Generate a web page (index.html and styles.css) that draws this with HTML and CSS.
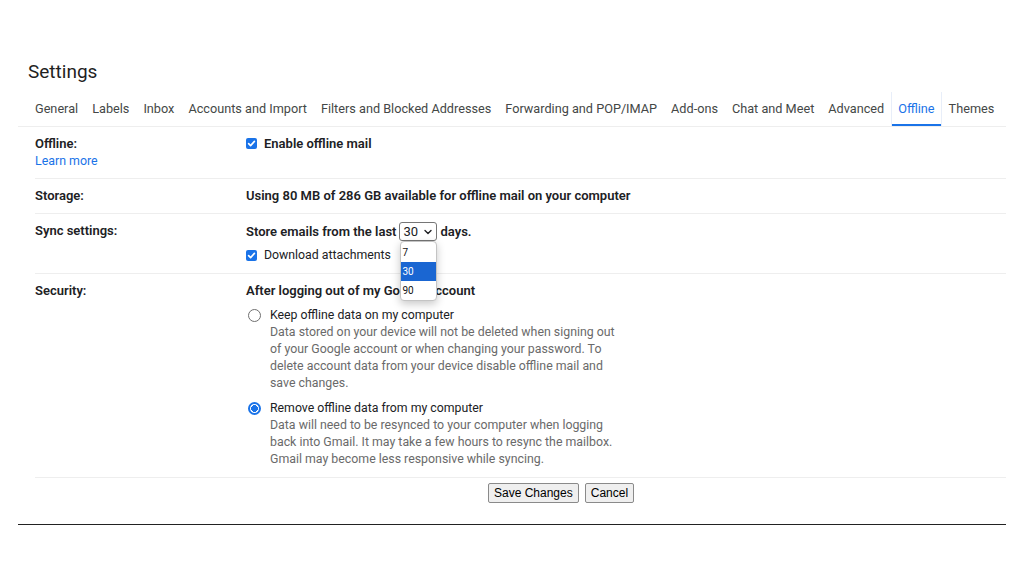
FILE: index.html
```html
<!DOCTYPE html>
<html lang="en">
  <head>
    <meta charset="UTF-8" />
    <meta name="viewport" content="width=device-width, initial-scale=1.0" />
    <link rel="stylesheet" href="styles.css">
    <title>Settings - Offline</title>
  </head>
  <body>
    <main class="page">
      <h1 class="title">Settings</h1>

      <nav class="tabs">
        <a class="tab" href="#">General</a>
        <a class="tab" href="#">Labels</a>
        <a class="tab" href="#">Inbox</a>
        <a class="tab" href="#">Accounts and Import</a>
        <a class="tab" href="#">Filters and Blocked Addresses</a>
        <a class="tab" href="#">Forwarding and POP/IMAP</a>
        <a class="tab" href="#">Add-ons</a>
        <a class="tab" href="#">Chat and Meet</a>
        <a class="tab" href="#">Advanced</a>
        <a class="tab active" href="#">Offline</a>
        <a class="tab" href="#">Themes</a>
      </nav>

      <div class="row">
        <div class="label">
          Offline:
          <a class="learn" href="#">Learn more</a>
        </div>
        <div class="value">
          <label class="check strong">
            <span class="box">
              <svg viewBox="0 0 11 11" width="11" height="11"><path d="M2.6 5.6 L4.6 7.6 L8.4 3.4" fill="none" stroke="#fff" stroke-width="1.6" stroke-linecap="round" stroke-linejoin="round"/></svg>
            </span>
            Enable offline mail
          </label>
        </div>
      </div>

      <div class="row">
        <div class="label">Storage:</div>
        <div class="value strong">Using 80 MB of 286 GB available for offline mail on your computer</div>
      </div>

      <div class="row sync">
        <div class="label">Sync settings:</div>
        <div class="value">
          <div class="line strong">
            Store emails from the last
            <span class="select">
              30
              <svg class="chev" viewBox="0 0 10 10" width="10" height="10"><path d="M2 3.5 L5 6.5 L8 3.5" fill="none" stroke="#202124" stroke-width="1.4" stroke-linecap="round" stroke-linejoin="round"/></svg>
              <span class="menu">
                <span class="opt">7</span>
                <span class="opt picked">30</span>
                <span class="opt">90</span>
              </span>
            </span>
            days.
          </div>
          <label class="check second">
            <span class="box">
              <svg viewBox="0 0 11 11" width="11" height="11"><path d="M2.6 5.6 L4.6 7.6 L8.4 3.4" fill="none" stroke="#fff" stroke-width="1.6" stroke-linecap="round" stroke-linejoin="round"/></svg>
            </span>
            Download attachments
          </label>
        </div>
      </div>

      <div class="row security">
        <div class="label">Security:</div>
        <div class="value">
          <div class="strong">After logging out of my Google account</div>
          <div class="option">
            <span class="radio"></span>
            <div>
              <div class="plain">Keep offline data on my computer</div>
              <p class="desc">Data stored on your device will not be deleted when signing out of your Google account or when changing your password. To delete account data from your device disable offline mail and save changes.</p>
            </div>
          </div>
          <div class="option">
            <span class="radio on"></span>
            <div>
              <div class="plain">Remove offline data from my computer</div>
              <p class="desc">Data will need to be resynced to your computer when logging back into Gmail. It may take a few hours to resync the mailbox. Gmail may become less responsive while syncing.</p>
            </div>
          </div>
        </div>
      </div>

      <div class="actions">
        <button class="btn">Save Changes</button>
        <button class="btn">Cancel</button>
      </div>
    </main>
  </body>
</html>
```

FILE: styles.css
```css
* {
  box-sizing: border-box;
}

body {
  margin: 0;
  background-color: #fff;
  color: #202124;
  font-family: Roboto, "Noto Sans", sans-serif;
  font-size: 13px;
}

.page {
  width: 988px;
  margin-left: 18px;
  padding-top: 60px;
  border-bottom: 1px solid #222;
  padding-bottom: 21px;
}

.title {
  margin: 0 0 8px 10px;
  font-size: 19px;
  font-weight: 400;
  line-height: 24px;
  color: #1f1f1f;
}

.tabs {
  display: flex;
  height: 35px;
  padding-left: 10px;
  border-bottom: 1px solid #eeeeee;
}

.tab {
  padding: 0 7px;
  line-height: 33px;
  font-size: 12.7px;
  color: #444746;
  text-decoration: none;
  white-space: nowrap;
}

.tab.active {
  padding: 0 6px;
  color: #1a73e8;
  border-left: 1px solid #e8eef9;
  border-right: 1px solid #e8eef9;
  box-shadow: inset 0 -2px 0 #1a73e8;
  height: 34px;
}

.row {
  display: grid;
  grid-template-columns: 211px 1fr;
  margin-left: 17px;
  padding: 8px 0 9px;
  line-height: 17px;
  border-bottom: 1px solid #eeeeee;
}

.label {
  font-weight: 600;
}

.learn {
  display: block;
  font-weight: 400;
  font-size: 12.4px;
  color: #1a73e8;
  text-decoration: none;
}

.strong {
  font-weight: 600;
}

.plain {
  font-size: 12.3px;
}

.check {
  display: flex;
  align-items: center;
  font-size: 12.3px;
}

.check.strong {
  font-size: 13px;
}

.box {
  display: inline-flex;
  width: 11px;
  height: 11px;
  margin-right: 7px;
  border-radius: 2px;
  background-color: #1a73e8;
}

.line {
  display: flex;
  align-items: center;
  height: 19px;
  gap: 3px;
}

.select {
  position: relative;
  display: inline-flex;
  align-items: center;
  width: 38px;
  height: 19px;
  padding-left: 3px;
  border: 1px solid #767676;
  border-radius: 3px;
  font-weight: 400;
  font-size: 13px;
}

.chev {
  margin-left: 5px;
}

.menu {
  position: absolute;
  top: 18px;
  left: 0;
  z-index: 5;
  display: flex;
  flex-direction: column;
  width: 37px;
  height: 60px;
  padding: 1px 0;
  background-color: #fff;
  border: 1px solid #c4c4c4;
  border-radius: 4px;
  box-shadow: 0 3px 8px rgba(0, 0, 0, 0.22);
  overflow: hidden;
}

.opt {
  height: 19px;
  line-height: 19px;
  padding-left: 1px;
  font-size: 10px;
  color: #111;
}

.opt.picked {
  background-color: #1a66d2;
  color: #fff;
}

.second {
  margin-top: 6px;
}

.option {
  display: flex;
  margin-top: 8px;
}

.radio {
  flex: none;
  width: 13px;
  height: 13px;
  margin: 2px 9px 0 2px;
  border: 1px solid #6f6f6f;
  border-radius: 50%;
}

.radio.on {
  border: 2px solid #1a73e8;
  background: radial-gradient(circle, #1a73e8 0 3.2px, #fff 3.6px);
}

.desc {
  margin: 0;
  width: 348px;
  font-size: 12.35px;
  color: #6a6a6a;
}

.actions {
  display: flex;
  gap: 6px;
  margin-top: 5px;
  padding-left: 470px;
}

.btn {
  height: 20px;
  margin: 0;
  padding: 0 5px;
  font-family: "Liberation Sans", Arial, sans-serif;
  font-size: 12px;
  color: #000;
  background-color: #efefef;
  border: 1px solid #8a8a8a;
  border-radius: 2px;
}
```
